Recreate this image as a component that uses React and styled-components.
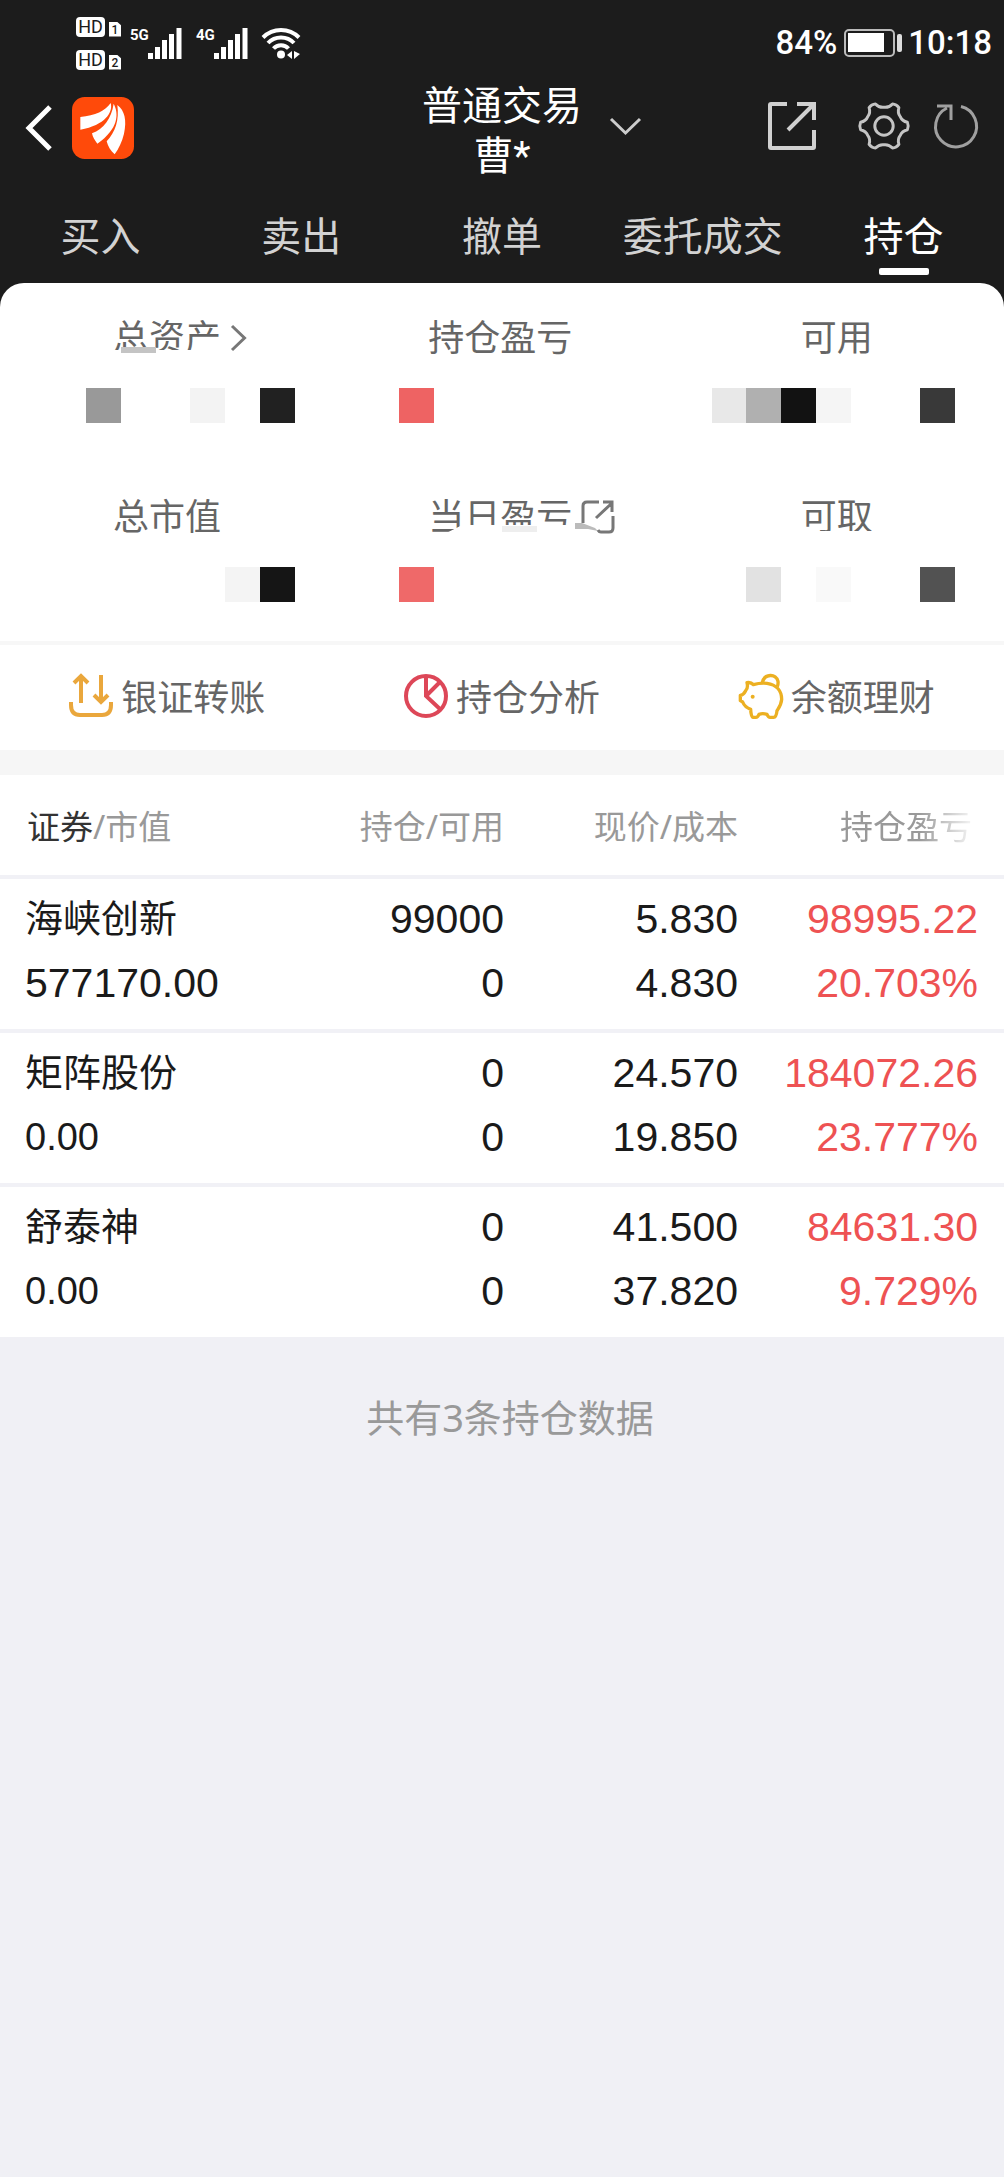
import React from 'react'
import styled, { createGlobalStyle } from 'styled-components'

const INK = '#1c1c1c'
const RED = '#ee5253'
const LINE = '#f1f1f6'

const GlobalStyle = createGlobalStyle`
  * {
    box-sizing: border-box;
  }
  body {
    margin: 0;
    background-color: #f0f0f5;
    font-family: 'Noto Sans', 'Noto Sans CJK SC', sans-serif;
  }
  button {
    padding: 0;
    border: 0;
    background: none;
    color: inherit;
    font: inherit;
    cursor: pointer;
  }
  svg {
    display: block;
    fill: none;
    overflow: visible;
  }
`

const Page = styled.div`
  display: flex;
  flex-direction: column;
  min-height: 100vh;
`

const Top = styled.div`
  background-color: ${INK};
  color: #fff;
`

const StatusBar = styled.div`
  display: flex;
  justify-content: space-between;
  align-items: center;
  height: 82px;
  padding: 4px 12px 0 76px;
  font-family: Roboto, sans-serif;
`

const StatusGroup = styled.div`
  display: flex;
  align-items: center;
  gap: ${({ gap }) => gap || 0}px;
`

const HdList = styled.div`
  display: grid;
  gap: 13px;
  margin-right: 9px;
`

const Hd = styled.div`
  display: flex;
  align-items: flex-end;
  gap: 4px;
`

const HdBadge = styled.span`
  width: 29px;
  height: 20px;
  border-radius: 4px;
  background-color: #fff;
  color: ${INK};
  font-size: 18px;
  line-height: 20px;
  text-align: center;
`

const Sim = styled.span`
  width: 12px;
  height: 15px;
  background-color: #fff;
  color: ${INK};
  clip-path: polygon(0 0, 65% 0, 100% 25%, 100% 100%, 0 100%);
  font-size: 12px;
  font-weight: 500;
  line-height: 16px;
  text-align: center;
`

const Signal = styled.div`
  display: flex;
  align-items: flex-start;
  margin-right: 14px;
`

const Network = styled.span`
  width: 18px;
  font-size: 15px;
  font-weight: 700;
  line-height: 15px;
`

const Clock = styled.span`
  font-size: 33px;
  font-weight: 500;
  line-height: 40px;
`

const Header = styled.header`
  display: grid;
  grid-template-columns: 1fr auto 1fr;
  align-items: center;
`

const HeaderSide = styled.div`
  display: flex;
  align-items: center;
  justify-content: ${({ end }) => (end ? 'space-between' : 'flex-start')};
  gap: 20px;
  padding: ${({ end }) => (end ? '0 26px 12px 28px' : '0 0 8px 26px')};
`

const HeaderActions = styled.div`
  display: flex;
  align-items: center;
  gap: 25px;
  button:first-child {
    margin-right: 18px;
  }
`

const Title = styled.h1`
  margin: 0;
  font-family: Roboto, 'Noto Sans CJK SC', sans-serif;
  font-size: 40px;
  font-weight: 400;
  line-height: 50px;
  text-align: center;
`

const TabBar = styled.nav`
  display: grid;
  grid-template-columns: repeat(5, 1fr);
  padding: 29px 0 8px;
`

const Tab = styled.a`
  display: flex;
  flex-direction: column;
  align-items: center;
  gap: 7px;
  color: ${({ active }) => (active ? '#fff' : '#d2d2d2')};
  font-size: 40px;
  line-height: 50px;
  text-decoration: none;
  white-space: nowrap;
  &::after {
    width: 50px;
    height: 7px;
    border-radius: 2px;
    background-color: ${({ active }) => (active ? '#fff' : 'transparent')};
    content: '';
  }
`

const Overview = styled.section`
  display: grid;
  gap: 70px;
  padding: 31px 0 39px;
  border-bottom: 4px solid #f7f7f7;
  border-radius: 24px 24px 0 0;
  background-color: #fff;
`

const OverviewRow = styled.div`
  display: grid;
  gap: 26px;
`

const Labels = styled.div`
  display: grid;
  grid-template-columns: 315fr 372fr 203fr;
  padding-left: 113px;
`

const Label = styled.div`
  position: relative;
  display: flex;
  align-items: center;
  gap: 10px;
  height: 48px;
  color: #666;
  font-size: 36px;
  line-height: 48px;
`

const LabelText = styled.span`
  clip-path: ${({ clip }) => clip || 'none'};
`

// leftover strip of the masking pattern that runs over a label
const Smudge = styled.span`
  position: absolute;
  left: ${({ left }) => left}px;
  bottom: 9px;
  width: 35px;
  height: 6px;
  background-color: ${({ color }) => color};
`

const Mosaic = styled.div`
  display: grid;
  grid-template-columns: repeat(25, 1fr);
  height: 35px;
  padding: 0 49px 0 86px;
`

const Tile = styled.span`
  grid-row: 1;
  grid-column: ${({ col }) => col};
  background-color: ${({ color }) => color};
`

const Shortcuts = styled.section`
  display: grid;
  grid-template-columns: repeat(3, 1fr);
  height: 105px;
  background-color: #fff;
  color: #666;
`

const Shortcut = styled.button`
  display: flex;
  align-items: center;
  justify-content: center;
  gap: 8px;
  && {
    font-size: 36px;
    line-height: 48px;
  }
  svg {
    margin-bottom: 4px;
  }
`

const HoldingsBand = styled.div`
  padding-top: 25px;
  background-color: #f6f6f6;
`

const Holdings = styled.table`
  width: 100%;
  border-spacing: 0;
  table-layout: fixed;
  background-color: #fff;
`

const Col = styled.col`
  width: ${({ width }) => width};
`

const HeadCell = styled.th`
  height: 104px;
  padding: ${({ first }) => (first ? '0 0 0 27px' : '0')};
  border-bottom: 4px solid ${LINE};
  color: #999;
  font-size: 33px;
  font-weight: 400;
  text-align: ${({ first }) => (first ? 'left' : 'right')};
  white-space: nowrap;
  &:last-child {
    padding-right: 32px;
  }
  strong {
    color: #333;
    font-weight: 400;
  }
`

const Fading = styled.span`
  mask-image: linear-gradient(to right, #000 60%, rgba(0, 0, 0, 0.1) 100%);
`

const Cell = styled.td`
  padding: 8px 0 14px;
  color: ${({ color }) => color || '#1a1a1a'};
  font-family: 'Liberation Sans', 'Noto Sans CJK SC', sans-serif;
  text-align: right;
  white-space: nowrap;
  tr + tr > & {
    border-top: 4px solid ${LINE};
  }
  &:first-child {
    padding-left: 25px;
    text-align: left;
  }
  &:last-child {
    padding-right: 26px;
  }
`

const Line = styled.div`
  height: 64px;
  font-size: ${({ size }) => size || 41}px;
  line-height: 64px;
`

const Footnote = styled.p`
  margin: 0;
  padding: 50px 0 0 16px;
  color: #999;
  font-size: 38px;
  line-height: 60px;
  text-align: center;
`

const polar = (deg, r) => {
  const a = (deg * Math.PI) / 180
  return `${(76 + r * Math.cos(a)).toFixed(1)} ${(76 + r * Math.sin(a)).toFixed(1)}`
}

const GEAR_PATH = [0, 60, 120, 180, 240, 300].map((t, i) => (
  `${i ? 'L' : 'M'}${polar(t - 9, 72)} Q${polar(t, 76)} ${polar(t + 9, 72)}`
  + ` Q${polar(t + 15, 57)} ${polar(t + 30, 57)} Q${polar(t + 45, 57)} ${polar(t + 51, 72)}`
)).join(' ') + ' Z'

const SignalBars = () => (
  <svg width="34" height="31" viewBox="0 0 34 31" stroke="#fff" strokeWidth="5">
    <path d="M2.500 25v6M9.500 19v12M16.500 12v19M23.500 6v25M31 0v31" />
  </svg>
)

const Wifi = () => (
  <svg width="39" height="31" viewBox="0 0 39 31" stroke="#fff" strokeWidth="4">
    <path d="M1 9.500C11-.5 27-.5 37 9.500M6 15c7-7.500 19-7.500 26 0M11.500 20.500c4-4.500 11-4.500 15 0" />
    <circle cx="19" cy="26.500" r="4" fill="#fff" stroke="none" />
    <path d="M25 27l5-4v8zM32 23v8l6-5z" fill="#fff" stroke="none" />
  </svg>
)

const Battery = () => (
  <svg width="59" height="28" viewBox="0 0 59 28">
    <rect x="2" y="1" width="49" height="26" rx="4" stroke="#bbb" strokeWidth="2" />
    <rect x="5" y="4" width="36" height="19" fill="#fff" />
    <rect x="54" y="5" width="5" height="18" rx="2" fill="#ddd" />
  </svg>
)

const Back = () => (
  <svg width="26" height="46" viewBox="0 0 26 46" stroke="#fff" strokeWidth="5">
    <path d="M24 2L3 23l21 21" />
  </svg>
)

const Logo = () => (
  <svg width="62" height="62" viewBox="0 0 186 186">
    <rect width="186" height="186" rx="38" fill="#ff4a0a" />
    <g fill="#fff">
      <path d="M25 60C70 56 100 42 116 18C124 45 100 85 25 98Z" />
      <path d="M60 109C95 95 118 65 125 20C141 50 140 95 76 140C68 130 62 120 60 109Z" />
      <path d="M104 133C130 105 142 70 136 24C158 40 165 70 156 110C150 135 140 155 128 172C116 162 108 148 104 133Z" />
    </g>
  </svg>
)

const ChevronDown = () => (
  <svg width="31" height="17" viewBox="0 0 31 17" stroke="#ccc" strokeWidth="3">
    <path d="M1 1l14.500 14L30 1" />
  </svg>
)

const ChevronRight = () => (
  <svg width="15" height="26" viewBox="0 0 15 26" stroke="#777" strokeWidth="3">
    <path d="M1 1l12.500 12L1 25" />
  </svg>
)

const Share = () => (
  <svg width="48" height="48" viewBox="0 0 48 48" stroke="#d0d0d0" strokeWidth="4">
    <path d="M19 2H3q-1 0-1 1v42q0 1 1 1h42q1 0 1-1V28M29 2h17v16M45 3L20 28" />
  </svg>
)

const Gear = () => (
  <svg width="50" height="50" viewBox="0 0 152 152" stroke="#c4c4c4" strokeWidth="9">
    <path d={GEAR_PATH} strokeLinejoin="round" />
    <circle cx="76" cy="76" r="28" />
  </svg>
)

const Refresh = () => (
  <svg width="44" height="44" viewBox="0 0 44 44" stroke="#a0a0a0" strokeWidth="3">
    <path d="M27 2.500A20.500 20.500 0 1 1 13 4M3 2h14v14" />
  </svg>
)

const CutShare = () => (
  <svg width="32" height="32" viewBox="0 0 32 32" stroke="#777" strokeWidth="3">
    <path d="M-7 22h7l13 5 3 3-10-2h-13z" fill="#bbb" stroke="none" />
    <path d="M17 1H5Q1 1 1 5v17M16 29q1 2 3 2h8q4 0 4-4V15M21 1h9v10M30 2L14 17" />
  </svg>
)

const Transfer = () => (
  <svg width="44" height="44" viewBox="0 0 44 44" stroke="#eaa73c" strokeWidth="4">
    <path d="M12 29V2M5 9l7-7 7 7M32 1v27M25 21l7 7 7-7M2 28v3q0 10 9 10h22q9 0 9-10v-3" />
  </svg>
)

const Pie = () => (
  <svg width="44" height="44" viewBox="0 0 44 44" stroke="#dd4758" strokeWidth="4">
    <circle cx="22" cy="22" r="20" />
    <path d="M22 2v20l15 14M22 22L36 8" />
  </svg>
)

const Piggy = () => (
  <svg width="44" height="44" viewBox="0 0 132 132" stroke="#ecb022" strokeWidth="10">
    <path
      d="M24 26Q36 24 43 32Q64 26 84 28C112 32 128 50 128 76C127 92 119 102 114 110Q112 130 104 130H93Q88 130 84 121Q71 117 60 121Q56 130 51 130H42Q36 129 35 106C24 102 15 94 11 84L4 80V64Q14 62 20 50Q28 42 24 26Z"
      strokeLinejoin="round"
    />
    <path d="M70 26C76-2 112-2 117 22Q118 30 115 38" />
    <circle cx="41" cy="68" r="6" fill="#ecb022" stroke="none" />
  </svg>
)

const TABS = ['买入', '卖出', '撤单', '委托成交', '持仓']

const TILES_TOP = [
  [1, '#999'], [4, '#f3f3f3'], [6, '#212121'], [10, '#ee6363'],
  [19, '#e8e8e8'], [20, '#b0b0b0'], [21, '#121212'], [22, '#f5f5f5'], [25, '#393939'],
]

const TILES_BOTTOM = [
  [5, '#f4f4f4'], [6, '#151515'], [10, '#ef6969'],
  [20, '#e2e2e2'], [22, '#f9f9f9'], [25, '#525252'],
]

const HOLDINGS = [
  { name: '海峡创新', value: '577170.00', held: '99000', free: '0', price: '5.830', cost: '4.830', profit: '98995.22', rate: '20.703%' },
  { name: '矩阵股份', value: '0.00', held: '0', free: '0', price: '24.570', cost: '19.850', profit: '184072.26', rate: '23.777%' },
  { name: '舒泰神', value: '0.00', held: '0', free: '0', price: '41.500', cost: '37.820', profit: '84631.30', rate: '9.729%' },
]

const MaskedValues = ({ tiles }) => (
  <Mosaic>
    {tiles.map(([col, color]) => <Tile key={col} col={col} color={color} />)}
  </Mosaic>
)

const App = () => (
  <Page>
    <GlobalStyle />
    <Top>
      <StatusBar>
        <StatusGroup>
          <HdList>
            <Hd><HdBadge>HD</HdBadge><Sim>1</Sim></Hd>
            <Hd><HdBadge>HD</HdBadge><Sim>2</Sim></Hd>
          </HdList>
          <Signal><Network>5G</Network><SignalBars /></Signal>
          <Signal><Network>4G</Network><SignalBars /></Signal>
          <Wifi />
        </StatusGroup>
        <StatusGroup gap={6}>
          <Clock>84%</Clock>
          <Battery />
          <Clock>10:18</Clock>
        </StatusGroup>
      </StatusBar>
      <Header>
        <HeaderSide>
          <button type="button" aria-label="返回"><Back /></button>
          <Logo />
        </HeaderSide>
        <Title>普通交易<br />曹*</Title>
        <HeaderSide end>
          <button type="button" aria-label="切换账户"><ChevronDown /></button>
          <HeaderActions>
            <button type="button" aria-label="分享"><Share /></button>
            <button type="button" aria-label="设置"><Gear /></button>
            <button type="button" aria-label="刷新"><Refresh /></button>
          </HeaderActions>
        </HeaderSide>
      </Header>
      <TabBar>
        {TABS.map((tab) => (
          <Tab key={tab} href="#" active={tab === '持仓' ? 1 : undefined}>{tab}</Tab>
        ))}
      </TabBar>
      <Overview>
        <OverviewRow>
          <Labels>
            <Label>
              <LabelText clip="inset(0 0 12px 0)">总资产</LabelText>
              <ChevronRight />
              <Smudge left={8} color="#c4c4c4" />
            </Label>
            <Label>持仓盈亏</Label>
            <Label>可用</Label>
          </Labels>
          <MaskedValues tiles={TILES_TOP} />
        </OverviewRow>
        <OverviewRow>
          <Labels>
            <Label>总市值</Label>
            <Label>
              <Smudge left={74} color="#eee" />
              <LabelText clip="polygon(0 0, 100% 0, 100% 32px, 34px 32px, 14px 42px, 0 42px)">当日盈亏</LabelText>
              <CutShare />
            </Label>
            <Label><LabelText clip="inset(0 0 10px 0)">可取</LabelText></Label>
          </Labels>
          <MaskedValues tiles={TILES_BOTTOM} />
        </OverviewRow>
      </Overview>
    </Top>
    <Shortcuts>
      <Shortcut type="button"><Transfer />银证转账</Shortcut>
      <Shortcut type="button"><Pie />持仓分析</Shortcut>
      <Shortcut type="button"><Piggy />余额理财</Shortcut>
    </Shortcuts>
    <HoldingsBand>
      <Holdings>
        <colgroup>
          <Col />
          <Col width="204px" />
          <Col width="234px" />
          <Col width="266px" />
        </colgroup>
        <thead>
          <tr>
            <HeadCell first={1}><strong>证券</strong>/市值</HeadCell>
            <HeadCell>持仓/可用</HeadCell>
            <HeadCell>现价/成本</HeadCell>
            <HeadCell><Fading>持仓盈亏</Fading></HeadCell>
          </tr>
        </thead>
        <tbody>
          {HOLDINGS.map((h) => (
            <tr key={h.name}>
              <Cell>
                <Line size={38}>{h.name}</Line>
                <Line size={h.value === '0.00' ? 38 : 41}>{h.value}</Line>
              </Cell>
              <Cell><Line>{h.held}</Line><Line>{h.free}</Line></Cell>
              <Cell><Line>{h.price}</Line><Line>{h.cost}</Line></Cell>
              <Cell color={RED}><Line>{h.profit}</Line><Line>{h.rate}</Line></Cell>
            </tr>
          ))}
        </tbody>
      </Holdings>
    </HoldingsBand>
    <Footnote>共有3条持仓数据</Footnote>
  </Page>
)

export default App
